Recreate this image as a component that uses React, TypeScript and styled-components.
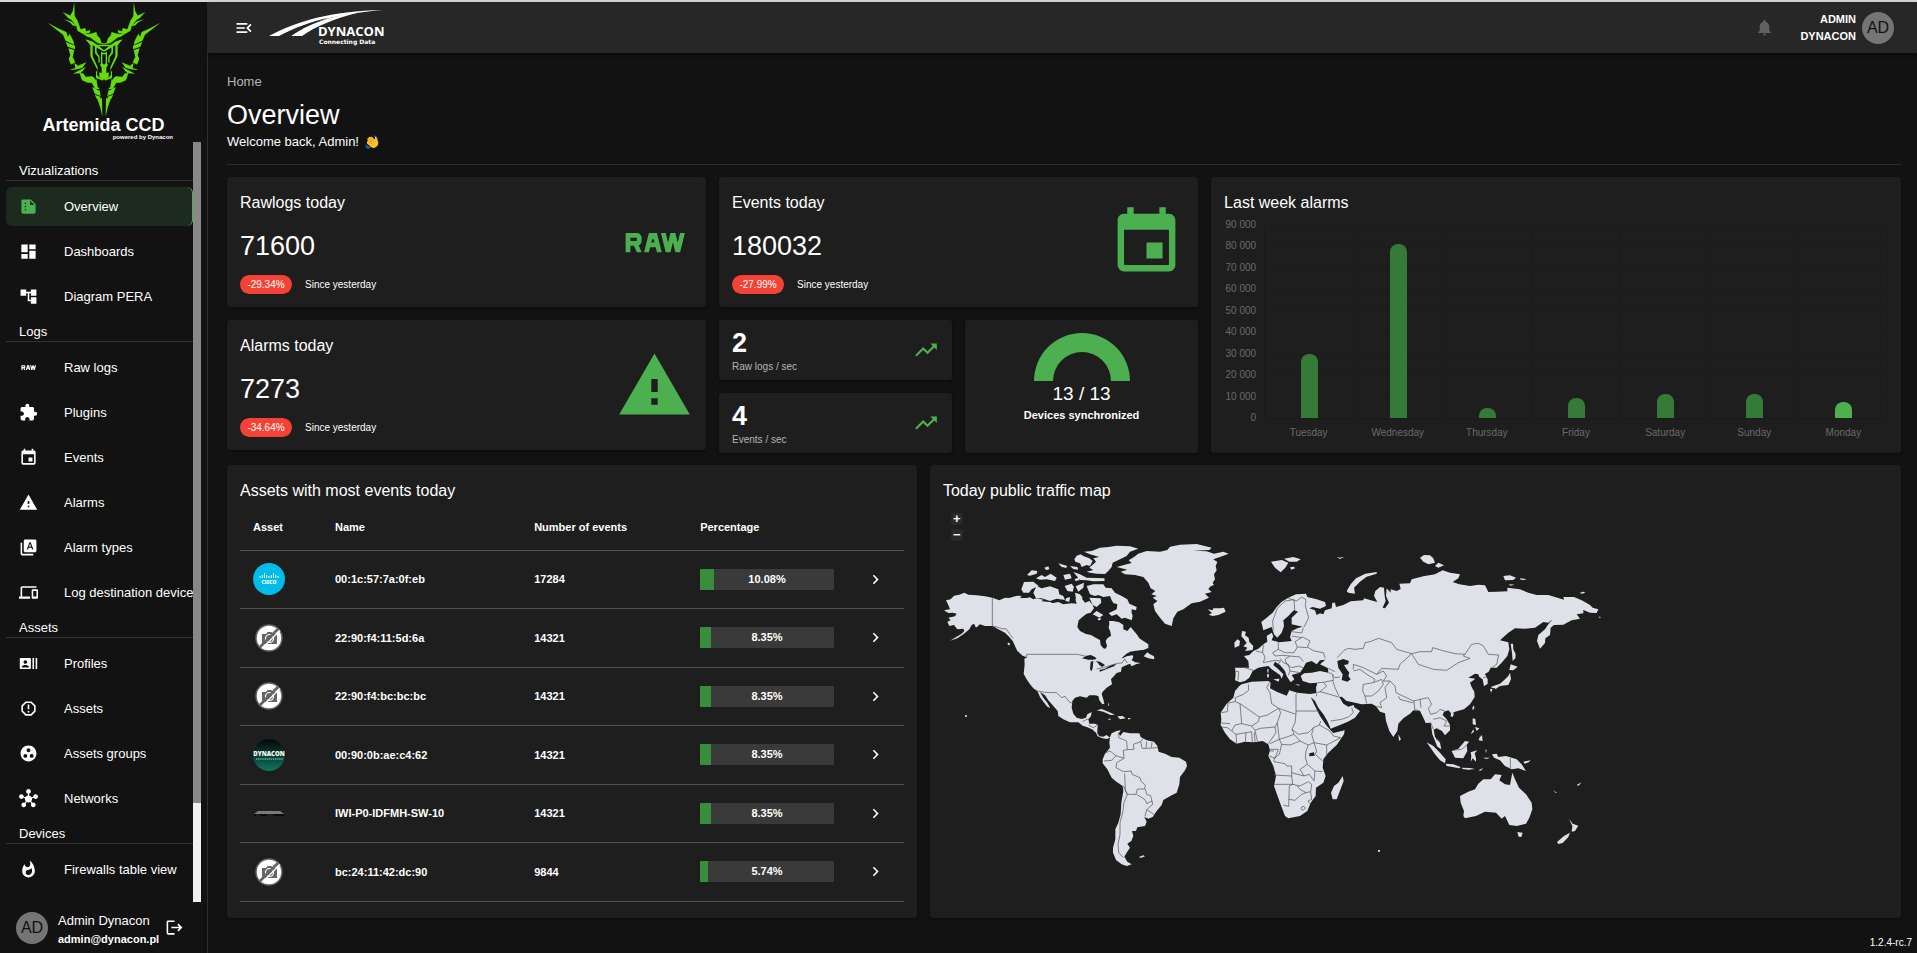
import React from "react";
import styled, { createGlobalStyle, css } from "styled-components";
import {
  MdAccountTree,
  MdChevronRight,
  MdDashboard,
  MdDevices,
  MdEvent,
  MdExtension,
  MdGroupWork,
  MdHub,
  MdLogout,
  MdMenuOpen,
  MdNotifications,
  MdRawOn,
  MdRecentActors,
  MdReportGmailerrorred,
  MdSummarize,
  MdTrendingUp,
  MdTypeSpecimen,
  MdWarning,
  MdWhatshot,
} from "react-icons/md";

const GlobalStyle = createGlobalStyle`
  *, *::before, *::after { box-sizing: border-box; }
  body {
    margin: 0;
    background: #121212;
    color: #fff;
    font-family: Arial, "Liberation Sans", sans-serif;
    font-size: 13px;
    line-height: 18px;
  }
  a { color: inherit; text-decoration: none; }
  button { font: inherit; color: inherit; background: none; border: 0; padding: 0; cursor: pointer; }
  h1, h2, p, ul { margin: 0; padding: 0; font-weight: 400; }
  ul { list-style: none; }
  svg { display: block; }
`;

const green = "#4caf50";

const Page = styled.div`
  display: flex;
  min-height: 100vh;
  border-top: 2px solid #d6dadb;
`;

/* ---------- Sidebar ---------- */

const Sidebar = styled.aside`
  flex: 0 0 208px;
  min-width: 0;
  height: calc(100vh - 2px);
  display: flex;
  flex-direction: column;
  border-right: 1px solid #2e2e2e;
`;

const Brand = styled.a`
  flex: 0 0 140px;
  display: flex;
  flex-direction: column;
  align-items: center;
`;

const BrandName = styled.span`
  font-size: 18px;
  line-height: 18px;
  font-weight: 700;
`;

const BrandNote = styled.span`
  align-self: flex-end;
  margin-right: 34px;
  font-size: 6px;
  line-height: 6px;
  font-weight: 700;
`;

const NavArea = styled.div`
  flex: 1;
  min-height: 0;
  display: flex;
  padding: 0 6px;
`;

const Nav = styled.nav`
  flex: 1;
  min-width: 0;
  overflow: hidden;
  padding-top: 19px;
`;

const ScrollTrack = styled.div`
  flex: 0 0 8px;
  background: #f1f1f1;
`;

const ScrollThumb = styled.div`
  height: 87%;
  background: #888;
`;

const NavHeading = styled.h2`
  padding-left: 13px;
  margin-bottom: 6px;
  border-bottom: 1px solid #333;
  font-size: 13px;
  line-height: 19px;
`;

const NavLink = styled.a<{ $active?: boolean }>`
  display: flex;
  align-items: center;
  gap: 26px;
  height: 39px;
  margin-bottom: 6px;
  padding-left: 13px;
  border-radius: 6px;
  white-space: nowrap;
  svg { flex: none; width: 19px; height: 19px; }
  ${(p) =>
    p.$active &&
    css`
      background: #1d2b1e;
      border-right: 1px solid ${green};
      svg { color: ${green}; }
    `}
`;

const Account = styled.div`
  flex: 0 0 51px;
  display: flex;
  align-items: center;
  padding: 0 23px 0 16px;
`;

const AccountText = styled.div`
  flex: 1;
  padding: 5px 0 0 10px;
  p + p { font-size: 11px; font-weight: 700; }
`;

const Avatar = styled.div`
  flex: none;
  width: 32px;
  height: 32px;
  border-radius: 50%;
  background: #757575;
  color: #121212;
  font-size: 16px;
  line-height: 32px;
  text-align: center;
`;

/* ---------- Main area ---------- */

const Main = styled.main`
  flex: 1;
  min-width: 0;
  display: flex;
  flex-direction: column;
`;

const TopBar = styled.header`
  height: 51px;
  display: flex;
  align-items: center;
  padding: 0 23px 0 26px;
  background: #272727;
  box-shadow: 0 2px 4px rgba(0, 0, 0, 0.5);
`;

const MenuButton = styled.button`
  margin-right: 14px;
`;

const BellButton = styled.button`
  margin-left: auto;
  color: #616161;
`;

const UserButton = styled.button`
  display: flex;
  align-items: center;
  gap: 6px;
  margin-left: 26px;
  text-align: right;
`;

const UserName = styled.span`
  font-size: 11px;
  line-height: 17px;
  font-weight: 700;
`;

const UserAvatar = styled(Avatar)`
  font-weight: 400;
`;

const Content = styled.div`
  flex: 1;
  padding: 20px 16px 0 19px;
`;

const Crumb = styled.a`
  display: block;
  color: #b5b5b5;
`;

const Title = styled.h1`
  margin-top: 6px;
  font-size: 27px;
  line-height: 36px;
`;

const Welcome = styled.p`
  display: flex;
  align-items: center;
  gap: 6px;
  padding-bottom: 13px;
  margin-bottom: 12px;
  border-bottom: 1px solid #2e2e2e;
`;

const Grid = styled.div`
  display: grid;
  grid-template-columns: repeat(12, minmax(0, 1fr));
  gap: 12px 13px;
`;

const Span = styled.div<{ $cols: number }>`
  grid-column: span ${(p) => p.$cols};
`;

const Card = styled.section`
  position: relative;
  padding: 13px;
  border-radius: 3px;
  background: #1e1e1e;
  box-shadow: 0 1px 3px rgba(0, 0, 0, 0.4);
`;

const SpanCard = styled(Card)<{ $cols: number }>`
  grid-column: span ${(p) => p.$cols};
`;

const CardTitle = styled.h2`
  font-size: 16px;
  line-height: 26px;
`;

const Halves = styled.div`
  display: grid;
  grid-template-columns: repeat(2, minmax(0, 1fr));
  gap: 13px;
  align-items: start;
`;

const Stack = styled.div`
  display: grid;
  gap: 13px;
`;

const StatCard = styled(Card)`
  display: flex;
  align-items: center;
  justify-content: space-between;
  height: 130px;
  > svg { width: 77px; height: 77px; color: ${green}; }
`;

const StatValue = styled.p`
  margin: 13px 0 12px;
  font-size: 27px;
  line-height: 34px;
`;

const StatTrend = styled.p`
  display: flex;
  align-items: center;
  gap: 13px;
  font-size: 10px;
`;

const Chip = styled.span`
  width: 52px;
  border-radius: 10px;
  background: #f44336;
  line-height: 19px;
  text-align: center;
`;

const RateCard = styled(Card)`
  display: flex;
  align-items: center;
  justify-content: space-between;
  height: 60px;
  padding: 0 13px;
  svg { width: 26px; height: 26px; color: ${green}; }
`;

const RateValue = styled.p`
  padding-top: 4px;
  font-size: 27px;
  line-height: 30px;
  font-weight: 700;
`;

const RateLabel = styled.p`
  color: #b5b5b5;
  font-size: 10px;
  line-height: 18px;
`;

const SyncCard = styled(Card)`
  display: flex;
  flex-direction: column;
  align-items: center;
  height: 133px;
`;

const SyncValue = styled.p`
  font-size: 19px;
  line-height: 26px;
`;

const SyncLabel = styled.p`
  font-size: 11px;
  line-height: 16px;
  font-weight: 700;
`;

/* ---------- Alarm chart ---------- */

const Chart = styled.div`
  display: grid;
  grid-template-columns: 32px 1fr;
  column-gap: 8px;
  margin-top: 3px;
  color: #6a6a6a;
  font-size: 10px;
  line-height: 12px;
`;

const Ticks = styled.div`
  display: flex;
  flex-direction: column;
  justify-content: space-between;
  height: 205px;
  text-align: right;
`;

const Plot = styled.div`
  display: flex;
  height: 194px;
  margin-top: 6px;
  border-left: 1px solid #1a1a1a;
  border-bottom: 1px solid #1a1a1a;
  background:
    linear-gradient(#1b1b1b 1px, transparent 1px) 0 0 / 100% calc(100% / 9),
    linear-gradient(90deg, transparent calc(100% - 1px), #1b1b1b 0) 0 0 / calc(100% / 7) 100%;
`;

const Slot = styled.div`
  flex: 1;
  display: flex;
  align-items: flex-end;
  justify-content: center;
`;

const Bar = styled.div<{ $today?: boolean }>`
  width: 17px;
  border-radius: 8px 8px 0 0;
  background: ${(p) => (p.$today ? green : "#357a38")};
`;

const Days = styled.div`
  grid-column: 2;
  display: flex;
  margin-top: 3px;
  span { flex: 1; text-align: center; }
`;

/* ---------- Assets table ---------- */

const Table = styled.table`
  width: 100%;
  margin-bottom: 3px;
  table-layout: fixed;
  border-collapse: collapse;
  font-size: 11px;
  font-weight: 700;
  th, td {
    padding: 0 13px;
    border-bottom: 1px solid #515151;
    text-align: left;
  }
  th { height: 46px; }
  td { height: 58px; }
  tr:nth-child(even) td { height: 59px; }
  th:nth-child(1) { width: 82px; }
  th:nth-child(2) { width: 30%; }
  th:nth-child(3) { width: 25%; }
  th:nth-child(5) { width: 57px; }
  td:last-child { padding: 0 19px; }
`;

const Meter = styled.div`
  position: relative;
  height: 21px;
  overflow: hidden;
  border-radius: 1px;
  background: #3a3a3a;
`;

const MeterFill = styled.div`
  height: 100%;
  background: #388e3c;
`;

const MeterText = styled.span`
  position: absolute;
  inset: 0;
  line-height: 21px;
  text-align: center;
`;

const RowButton = styled.button`
  display: block;
  svg { width: 19px; height: 19px; }
`;

/* ---------- Map ---------- */

const MapArea = styled.div`
  position: relative;
  padding-top: 7px;
`;

const ZoomControls = styled.div`
  position: absolute;
  top: 9px;
  left: 8px;
  display: grid;
  gap: 4px;
`;

const ZoomButton = styled.button`
  width: 12px;
  height: 12px;
  border-radius: 2px;
  background: #292929;
  font-size: 13px;
  line-height: 12px;
  font-weight: 700;
`;

const MapDrawing = styled.svg`
  width: 660px;
  max-width: 100%;
  height: auto;
`;

const Version = styled.footer`
  padding: 0 5px 1px 0;
  font-size: 10px;
  line-height: 18px;
  text-align: right;
`;

/* ---------- Drawings ---------- */

const HornHalf = () => (
  <g fill="#63dd0d" stroke="none">
    <path d="M222 9L223 50L232 64L237 80L228 80L213 62L209 50L217 36Z" />
    <path d="M187 38L212 50L222 66L204 57Z" />
    <path d="M191 60L212 66L232 82L216 78L210 70Z" />
    <path d="M228 83L236 76L241 90L254 86L258 96L270 92L268 101L250 104L232 95Z" />
    <path d="M238 97L262 104L277 102L288 98L291 108L277 115L262 113Z" />
    <path d="M268 113L291 108L300 118L303 130L318 136L292 132Z" />
    <path d="M142 70L176 88L198 98L205 120L185 104Z" />
    <path d="M188 107L203 112L208 103L219 124L222 137L196 124Z" />
    <path d="M196 128L224 139L224 150L202 142Z" />
    <path d="M204 147L222 152L217 172L225 189L212 196L205 178L210 168Z" />
    <path d="M207 211L225 206L222 190L233 199L258 189L246 206L222 211Z" />
    <path d="M218 223L257 202L248 214L240 222Z" />
    <path d="M238 222L248 222L256 232L276 231L285 240L280 251L262 250L245 243Z" />
    <path d="M275 252L288 238L292 262L299 270L284 268Z" />
    <path d="M275 263L298 274L301 290L284 284Z" />
    <path d="M283 286L300 292L302 306L290 300Z" />
    <path d="M292 302L305 296L306 352L300 325Z" />
    <path d="M255 120L275 126L290 136L311 136L311 141L296 141L311 152L311 157L289 145L289 158L298 172L298 190L294 190L294 174L284 162L284 142L277 138L277 170L292 204L290 226L304 243L287 236L287 218L291 212L270 170L270 138Z" />
    <path d="M302 157L311 161L311 166L306 164L306 192L311 196L311 240L305 244L297 234L297 218L304 222L304 205L299 196L302 192Z" />
  </g>
);

const StagLogo = () => (
  <svg width="114" height="114" viewBox="140 8 342 342" aria-hidden="true">
    <HornHalf />
    <g transform="translate(622 0) scale(-1 1)">
      <HornHalf />
    </g>
  </svg>
);

const DynaconLogo = () => (
  <svg width="116" height="37" viewBox="0 0 116 37" role="img" aria-label="Dynacon">
    <path d="M1 27C30 12 62 2 115 1C68 5 38 14 11 27Z" fill="#fff" />
    <path d="M23 27C40 15 62 7 92 3C68 9 46 18 34 27Z" fill="#fff" />
    <path d="M12 27C26 19 44 12 60 9C44 14 32 20 23 27Z" fill="#272727" />
    <text x="50" y="27" fill="#fff" fontFamily="Open Sans" fontWeight="700" fontSize="13">DYNACON</text>
    <text x="51" y="35" fill="#fff" fontFamily="DejaVu Sans" fontWeight="700" fontSize="6">Connecting Data</text>
  </svg>
);

const WavingHand = () => (
  <svg width="14" height="14" viewBox="0 0 28 28" aria-hidden="true">
    <path d="M3 20q2 5 7 5M1 22q2 5 6 5M19 2q4 0 6 4M18 5" fill="none" stroke="#2e87c8" strokeWidth="2" strokeLinecap="round" />
    <path d="M4 13L6 11L4 8L7 6L8 4L11 4L13 3L20 9L20 4Q23 3 24 7L26 13Q28 21 22 24Q17 28 12 24L4 17Z" fill="#fbc02d" />
    <path d="M6 10L14 17M7 6L16 14M11 4L18 11" stroke="#d98b12" strokeWidth="1.4" />
  </svg>
);

const DonutArc = () => (
  <svg width="96" height="48" viewBox="0 0 96 48" aria-hidden="true">
    <path d="M0 48A48 48 0 0 1 96 48H77A29 29 0 0 0 19 48Z" fill={green} />
  </svg>
);

const CiscoAvatar = () => (
  <svg width="32" height="32" viewBox="0 0 32 32" role="img" aria-label="Cisco">
    <circle cx="16" cy="16" r="16" fill="#00bceb" />
    <path
      d="M7 13v2M9.300 12v3M11.500 10v5M13.700 12v3M16 13v2M18.300 12v3M20.500 10v5M22.700 12v3M25 13v2"
      stroke="#fff"
      strokeWidth="1"
    />
    <text x="16" y="21" fill="#fff" fontFamily="Open Sans" fontSize="5" fontWeight="800" textAnchor="middle">CISCO</text>
  </svg>
);

const NoPhotoAvatar = () => (
  <svg width="32" height="32" viewBox="0 0 32 32" role="img" aria-label="No picture">
    <circle cx="16" cy="16" r="13" fill="#fff" stroke="#666" strokeWidth="1.500" />
    <path d="M9 12h4l1.500-2h4l1.500 2h4v10H9z" fill="#666" />
    <circle cx="16.500" cy="16.500" r="4" fill="#666" stroke="#fff" strokeWidth="1.200" />
    <path d="M9 26.500L27 8.500" stroke="#fff" strokeWidth="1.200" />
    <path d="M7 25L25 7" stroke="#666" strokeWidth="2.600" />
  </svg>
);

const DynaconAvatar = () => (
  <svg width="32" height="32" viewBox="0 0 32 32" role="img" aria-label="Dynacon">
    <defs>
      <linearGradient id="deep" x1="0" y1="0" x2="0" y2="1">
        <stop offset="0" stopColor="#020606" />
        <stop offset="1" stopColor="#0f7560" />
      </linearGradient>
    </defs>
    <circle cx="16" cy="16" r="16" fill="url(#deep)" />
    <text x="16" y="17" fill="#fff" fontFamily="Open Sans" fontSize="6" fontWeight="800" textAnchor="middle">DYNACON</text>
    <path d="M3 20H30" stroke="#9cc" strokeWidth="1" strokeDasharray="1.500 .6" />
  </svg>
);

const SwitchAvatar = () => (
  <svg width="32" height="32" viewBox="0 0 32 32" role="img" aria-label="Switch">
    <path d="M5 14H27L31 17H1Z" fill="#7d7a76" />
    <path d="M1 17H31V19H1Z" fill="#0b0b0d" />
    <path d="M3 18H7M14 18H20" stroke="#333" strokeWidth="1" />
  </svg>
);

const Land = styled.path`
  fill: #dee1e8;
`;

const Sea = styled.path`
  fill: #1e1e1e;
`;

const Border = styled.path`
  fill: none;
  stroke: #4b4d50;
  stroke-width: 2;
`;

const WorldMap = () => (
  <MapDrawing viewBox="39 30 1980 1140" role="img" aria-label="World map">
    <g strokeLinejoin="round">
      <Land d="M42 328L60 325L55 312L48 298L62 295L72 284L88 281L103 275L115 281L140 283L165 286L187 290L208 298L225 290L238 291L250 287L262 284L275 285L270 291L290 291L300 289L310 295L320 292L340 296L332 303L350 306L370 306L385 303L400 310L425 307L440 308L436 295L445 290L455 292L465 305L478 300L488 312L492 322L482 335L470 338L458 347L446 358L442 378L450 390L468 399L483 402L497 410L510 417L512 432L520 442L527 443L531 435L527 420L532 412L543 404L541 392L536 380L538 368L537 360L550 360L568 364L580 372L580 385L592 390L602 378L610 388L622 402L628 412L640 420L655 430L655 441L640 447L618 449L600 452L588 460L576 474L590 464L606 459L610 468L605 478L616 484L632 486L618 490L605 496L600 488L590 492L575 499L573 512L560 516L552 525L543 535L546 550L530 560L518 572L515 580L520 595L523 608L517 610L508 598L505 585L495 583L478 583L470 590L450 586L435 590L427 600L425 620L430 638L440 650L455 654L468 650L472 640L485 633L483 645L475 655L478 668L495 668L504 672L502 685L502 697L508 706L520 707L530 702L540 710L530 714L515 711L503 706L498 695L486 685L470 678L458 674L445 664L420 664L400 655L385 645L383 630L370 615L355 598L345 583L330 573L340 590L352 605L361 622L352 617L340 602L330 588L322 570L310 562L300 550L288 532L281 518L284 490L283 473L290 470L278 460L262 450L248 420L238 408L225 395L205 385L187 375L165 375L150 370L138 380L132 368L125 372L118 385L100 400L82 412L60 419L75 410L95 398L103 390L100 383L82 385L72 372L58 375L52 362L62 358L55 350L75 346L80 338L68 335L55 336Z" />
      <Sea d="M456 472L470 464L482 462L495 468L500 474L488 476L475 476ZM482 482L490 480L488 500L485 511L480 505ZM496 480L510 482L525 492L516 498L508 492L502 484ZM508 507L525 503L540 494L560 488L552 496L530 504L510 512ZM574 472L590 458L612 452L640 447L610 462L590 466Z" />
      <Land d="M641 466L652 454L660 460L672 466L673 475L655 472ZM462 152L485 150L510 140L535 138L560 134L600 136L625 143L600 152L590 165L570 175L548 185L545 198L535 210L525 219L500 218L480 215L470 212L490 207L478 200L498 182L490 172L508 168L480 160ZM433 175L440 164L452 160L460 165L478 172L488 180L480 195L470 192L455 198L450 187L436 182ZM430 213L450 220L470 230L523 232L524 240L490 241L470 238L450 237L440 225ZM470 255L490 250L520 250L527 260L545 262L555 275L575 285L592 295L598 308L620 318L618 328L605 325L605 335L608 345L605 358L585 350L575 353L560 340L545 345L536 337L560 325L562 310L550 306L545 298L540 285L520 288L505 282L495 285L480 280L475 268ZM478 290L512 292L514 305L500 318L488 312ZM488 340L500 330L520 342L508 350ZM310 275L320 255L335 262L360 256L385 265L388 280L400 285L405 297L380 293L360 300L335 292L318 292ZM274 265L282 243L310 242L326 255L305 265L297 275L280 275ZM291 222L305 208L322 210L320 218L300 224ZM318 232L335 222L345 228L362 218L380 230L375 240L350 235L330 236ZM385 187L412 195L408 201L394 197ZM400 222L420 218L425 232L405 236ZM404 255L425 248L432 258L428 272L412 270ZM437 256L462 245L460 260L445 272ZM435 275L450 280L458 290L446 303L438 295ZM343 200L355 196L358 205L348 207ZM420 195L442 198L445 206L430 204ZM434 234L446 230L448 238L436 240ZM408 292L420 288L418 302L406 300ZM330 300L365 304L362 309L332 305ZM503 353L512 350L512 357L504 358ZM233 425L240 426L238 434L233 430ZM262 450L275 456L288 468L278 464Z" />
      <Land d="M560 198L590 190L605 186L596 178L612 168L625 158L650 150L690 152L712 147L720 137L750 131L800 129L845 140L838 147L790 149L830 151L852 158L880 152L896 158L870 168L850 175L862 183L857 195L860 208L852 220L855 235L848 245L852 252L842 256L835 264L845 273L825 278L837 290L810 302L785 307L760 325L742 332L730 352L725 375L705 368L690 350L675 330L670 310L682 300L668 290L680 285L664 280L676 270L662 262L655 245L640 228L615 222L585 220L572 212L592 206Z" />
      <Land d="M833 325L848 328L850 322L870 322L882 320L887 332L865 342L848 345L836 341L846 336ZM500 628L515 624L535 632L555 641L542 642L520 632ZM562 646L578 645L587 652L570 655ZM535 653L543 653L541 656L535 656ZM594 651L602 652L600 655L594 655ZM627 1068L640 1063L645 1066L632 1071ZM105 642L111 643L110 648L105 647ZM535 603L537 612L534 616Z" />
      <Land d="M540 708L545 697L560 690L572 688L566 698L571 704L580 693L600 697L628 697L632 708L650 718L672 722L682 735L686 752L705 758L725 768L748 770L768 782L771 795L765 808L750 828L748 850L740 875L725 883L700 897L695 912L680 930L668 948L655 953L643 948L650 962L645 975L622 979L618 990L606 990L610 1005L604 1020L592 1028L600 1040L590 1055L583 1067L592 1082L605 1090L590 1095L575 1090L558 1077L549 1055L549 1040L556 1015L556 985L565 965L572 940L574 905L580 870L578 855L560 843L545 830L532 805L518 787L518 775L525 758L540 740L538 725Z" />
      <Border d="M187 290V375L205 379L218 384L228 383L240 400L250 412M290 470V460H443L468 466M500 504L520 500L545 492L562 487L576 486L584 474L592 486M322 570L345 574L380 575L395 590L405 586L418 603L427 607M458 662L470 655L478 655M475 672L490 680L504 672M566 694L566 710L590 720L592 746L580 748L582 772M592 746L612 745L610 730L632 722L640 712M632 722L636 742L650 742L684 740M650 722L648 742M666 724L664 740M525 756L540 750L558 764L545 778L522 780M558 764L582 772L560 785L558 800L580 812L604 810L606 820L630 830L634 842L646 852L644 864L622 864L618 880L592 880L586 868L584 818M646 864L650 880L662 884L666 900L650 908L645 896L620 880M666 900L668 910L650 926L645 946M650 926L672 940M592 880L582 905L578 935L570 965L570 1000L564 1030L566 1055L580 1070M580 855L592 880" />
    </g>
    <g transform="translate(870 60)" strokeLinejoin="round">
      <Land d="M124 303L140 290L158 275L170 258L185 242L205 230L228 220L258 218L262 228L290 235L315 243L318 255L300 263L278 258L268 262L285 268L290 282L300 277L310 280L315 268L335 262L337 245L345 245L348 258L370 252L392 241L430 238L432 232L450 237L472 243L462 225L466 210L480 198L492 200L494 225L497 240L488 260L495 262L507 245L498 225L500 202L512 215L512 205L530 210L542 204L538 188L570 187L575 175L610 166L645 160L668 148L690 155L720 160L715 172L698 183L718 190L750 195L775 191L795 193L805 213L830 212L862 211L862 200L900 205L925 215L950 222L985 222L1032 236L1030 228L1062 228L1085 238L1110 252L1118 260L1135 265L1130 276L1110 275L1090 267L1090 277L1070 280L1080 293L1055 298L1030 311L1002 312L992 320L990 342L976 352L975 366L960 383L951 360L955 342L975 325L985 310L998 295L985 305L970 303L945 320L915 323L885 322L865 335L840 358L865 364L868 385L862 405L845 425L830 440L812 440L806 452L795 459L803 475L803 488L792 496L788 475L778 468L775 460L765 458L745 470L766 473L750 485L756 500L763 512L764 528L750 550L732 565L705 572L695 578L685 568L672 572L668 582L680 595L690 612L690 628L675 643L666 630L650 622L641 626L645 648L660 665L664 685L652 677L643 655L637 640L632 605L617 606L610 590L600 570L580 568L572 577L550 592L535 608L532 630L520 648L508 630L498 600L495 577L480 572L468 556L455 548L425 550L395 543L380 540L365 527L358 528L370 548L385 557L402 552L402 558L420 570L405 590L382 603L332 623L322 600L310 580L295 560L285 540L275 530L290 525L288 500L292 485L270 487L248 480L242 465L252 457L275 455L300 450L325 455L324 442L300 430L316 416L300 418L290 430L275 420L258 425L250 440L240 455L222 460L215 462L223 475L212 484L200 465L195 450L180 432L165 422L160 432L175 445L190 460L185 473L180 462L155 445L145 435L130 437L115 440L98 450L88 470L75 480L60 484L45 478L47 460L45 440L75 440L87 440L85 420L72 405L88 402L100 390L115 383L130 370L142 362L140 345L155 335L160 345L155 358L178 364L215 360L210 348L215 330L232 322L248 317L215 310L215 290L234 272L222 267L205 285L190 298L192 315L185 335L172 350L162 340L155 318L130 328Z" />
      <Land d="M65 490L95 482L145 480L152 485L150 502L170 512L200 524L208 508L232 515L270 519L290 516L286 534L273 530L285 555L300 585L318 612L332 628L340 636L374 628L372 640L350 672L325 695L310 715L308 740L317 765L310 785L288 800L287 825L272 845L262 870L240 885L205 892L195 885L180 845L162 795L168 765L160 735L145 705L150 688L145 670L128 660L100 664L75 662L50 668L30 655L15 635L2 612L4 595L2 575L20 548L40 530L45 510L58 495Z" />
      <Sea d="M352 420L370 414L387 420L384 430L372 432L380 445L388 455L385 465L392 475L382 482L365 477L368 460L355 440ZM268 697L282 694L284 704L268 706Z" />
      <Land d="M66 330L78 332L75 343L86 350L88 363L100 375L98 387L75 390L82 380L70 376L80 366L72 355L64 345ZM43 365L52 355L60 360L58 374L44 380ZM153 122L185 117L205 125L196 140L182 154L165 140ZM192 113L220 108L242 115L230 122L208 122ZM210 139L222 137L225 142L214 146ZM350 107L360 110L374 107L360 114ZM470 153L470 158L440 167L420 182L402 200L405 218L385 215L380 210L392 190L408 172L436 158ZM600 110L612 102L630 103L640 112L645 125L625 130L610 122ZM645 135L655 125L672 133L655 140ZM850 165L870 163L888 170L880 177L855 178ZM900 172L920 174L912 177L902 176ZM866 190L884 191L872 194ZM1078 216L1090 212L1096 214L1088 218ZM872 368L879 368L880 385L887 400L886 412L878 420L876 395ZM872 430L893 437L880 448L868 447ZM870 455L873 475L865 492L845 494L820 502L812 498L840 488L852 478L865 465ZM810 503L818 505L813 515ZM824 499L836 498L826 505ZM762 553L763 562L758 568L757 560ZM693 574L702 578L698 588L692 586ZM758 592L766 594L768 612L758 610ZM765 618L778 622L770 630ZM778 650L786 642L788 660L776 658ZM760 625L762 632L752 640ZM535 640L543 655L537 660ZM620 664L640 675L660 695L677 715L675 727L660 718L645 700ZM677 728L700 730L722 738L718 742L680 735ZM725 740L750 741L765 744L745 746L728 744ZM775 748L790 741L782 749ZM695 690L715 683L735 660L747 662L740 672L742 690L730 712L705 710ZM752 694L772 688L764 697L768 712L768 722L758 712L752 722L754 705ZM796 684L800 688L798 696ZM788 710L810 710L800 714ZM816 700L830 698L835 708L858 705L890 715L905 730L918 750L895 742L875 745L855 735L840 718L822 710ZM910 722L932 718L926 724L914 728ZM940 722L950 732M972 740L980 748M720 825L745 812L765 805L775 788L790 775L812 775L825 760L845 762L838 778L855 790L870 792L877 755L885 775L897 800L918 820L935 845L937 865L928 890L918 908L890 915L868 912L855 885L845 893L828 875L795 872L768 885L735 892L730 885L732 870L722 845ZM892 933L908 935L904 948L896 947ZM1047 893L1058 908L1075 914L1065 930L1055 932L1057 915ZM1050 935L1045 948L1028 966L1015 969L1011 963L1032 945ZM1000 808L1012 817L1006 815ZM1070 792L1084 784L1076 794ZM368 765L371 780L350 835L338 835L333 815L342 795L355 785ZM474 987L480 987L480 992L474 992ZM142 443L146 445L145 455L142 454ZM142 458L147 460L146 470L141 468ZM160 475L178 473L176 482ZM225 490L240 491L236 494ZM1135 286L1144 290L1138 290Z" />
      <Border d="M160 328L158 300L172 262L195 240L222 236L224 266M205 232L230 240L245 228L258 236L256 255L266 290L252 318M130 370L128 395L108 390M128 395L135 408L130 425L145 422L165 418L182 420L172 432M175 364V385L158 395L165 405L185 403L210 405M175 385L195 395L222 395L232 378L225 362L248 348L270 360L262 378L282 390L310 395L316 412M215 345L245 350M215 332L245 336L250 320M232 378L262 380M210 405L195 415L200 430L215 440L235 435L250 440M210 405L240 408L250 422M45 450L56 452L54 478M75 440L100 448M180 412L190 425L205 430L210 450L205 462M210 450L240 455M325 455L335 458L345 470L360 468M325 442L345 452M292 485L310 484L340 478L338 460M352 410L372 388L385 382L405 385L430 382L435 365L450 362L476 352L515 365L530 385L575 398L600 392L635 392L638 380L665 388L705 398L735 400L755 370L775 367L790 375L805 400L836 402L830 430L815 440M575 398L595 430L640 445L680 448L715 425L750 412L730 405L735 400M575 398L540 430L535 445L485 442L470 460L430 440L400 430V445M400 450L420 445L440 460L465 475L460 485L430 490L428 510L435 525L440 548M470 460L490 450L500 465L490 480L510 480L525 495L528 515L580 540L600 535L625 530L635 550L625 562L632 580M460 485L485 475L490 490L475 510L455 525L435 525M510 480L495 500L500 530L480 545L485 560L470 556M535 525L540 535L580 546M582 538L584 565L600 570M600 535L603 560M632 580L650 575L660 565L675 570M640 595L660 590L680 600L672 615L690 615M632 605L640 625M648 655L660 658M310 484L320 495L300 512L290 516M338 478L345 500L358 528M300 512L330 520L355 528M332 600L365 595L385 588L400 575L395 560M698 688L725 685L740 672M871 711V742M790 470L800 468" />
      <Border d="M85 490L86 508L70 520L46 530M46 530V542L60 548L118 588L115 602L95 615L65 608L60 548M4 575L22 572L24 546L46 542M118 588L142 582L176 562L155 548L150 515L140 500L148 485M176 562L228 580V520L232 515M228 570H298M228 580L225 605L216 625L222 640L200 648L178 655M176 562L182 575L172 605L178 655L150 668M172 605L165 618L120 622L105 628L112 660M165 618L168 635L145 668M95 615L105 628M65 608L45 612L35 630L22 620L4 618M4 606L30 608M35 630L48 640L50 668M78 635L76 662M95 632L97 664M103 634L105 662M78 635L95 632M48 640L78 635M222 640L240 660L265 672L282 665L275 640L280 620L298 612L302 600M216 625L235 640L265 635L280 620M298 612L330 630L340 645L362 650L320 672L282 665M320 672V705L312 712M282 665L290 690L286 700L308 720M178 655L185 670L210 672L240 660M185 670L178 700L162 712L162 722L195 728L200 735H215V765L160 762M265 672L258 690L256 710L262 730L240 745L252 765L215 755M162 690H150M148 705L165 712L175 685L150 685M262 730L285 750L308 752M285 750L282 780L268 760L252 765M215 765L218 790L162 790M218 790L208 795L206 856L190 852M218 790L240 795L265 782L275 790L272 812L258 815L240 805L232 795M206 835L225 838L245 820L258 815M272 812L275 835L264 840L270 848M245 858L252 856L256 862L248 868L243 864Z" />
    </g>
  </MapDrawing>
);

/* ---------- Data ---------- */

const navigation = [
  {
    heading: "Vizualizations",
    links: [
      { label: "Overview", Icon: MdSummarize, active: true },
      { label: "Dashboards", Icon: MdDashboard },
      { label: "Diagram PERA", Icon: MdAccountTree },
    ],
  },
  {
    heading: "Logs",
    links: [
      { label: "Raw logs", Icon: MdRawOn },
      { label: "Plugins", Icon: MdExtension },
      { label: "Events", Icon: MdEvent },
      { label: "Alarms", Icon: MdWarning },
      { label: "Alarm types", Icon: MdTypeSpecimen },
      { label: "Log destination devices", Icon: MdDevices },
    ],
  },
  {
    heading: "Assets",
    links: [
      { label: "Profiles", Icon: MdRecentActors },
      { label: "Assets", Icon: MdReportGmailerrorred },
      { label: "Assets groups", Icon: MdGroupWork },
      { label: "Networks", Icon: MdHub },
    ],
  },
  {
    heading: "Devices",
    links: [{ label: "Firewalls table view", Icon: MdWhatshot }],
  },
] as { heading: string; links: { label: string; Icon: React.ComponentType; active?: boolean }[] }[];

const ticks = ["90 000", "80 000", "70 000", "60 000", "50 000", "40 000", "30 000", "20 000", "10 000", "0"];

const alarms = [
  { day: "Tuesday", value: 29900 },
  { day: "Wednesday", value: 81000 },
  { day: "Thursday", value: 4700 },
  { day: "Friday", value: 9500 },
  { day: "Saturday", value: 11200 },
  { day: "Sunday", value: 11100 },
  { day: "Monday", value: 7273 },
];

const assets = [
  { Picture: CiscoAvatar, name: "00:1c:57:7a:0f:eb", events: 17284, share: "10.08%" },
  { Picture: NoPhotoAvatar, name: "22:90:f4:11:5d:6a", events: 14321, share: "8.35%" },
  { Picture: NoPhotoAvatar, name: "22:90:f4:bc:bc:bc", events: 14321, share: "8.35%" },
  { Picture: DynaconAvatar, name: "00:90:0b:ae:c4:62", events: 14321, share: "8.35%" },
  { Picture: SwitchAvatar, name: "IWI-P0-IDFMH-SW-10", events: 14321, share: "8.35%" },
  { Picture: NoPhotoAvatar, name: "bc:24:11:42:dc:90", events: 9844, share: "5.74%" },
];

type StatProps = { title: string; value: string; change: string; Icon: React.ComponentType };

const Stat = ({ title, value, change, Icon }: StatProps) => (
  <StatCard>
    <div>
      <CardTitle>{title}</CardTitle>
      <StatValue>{value}</StatValue>
      <StatTrend>
        <Chip>{change}</Chip>
        Since yesterday
      </StatTrend>
    </div>
    <Icon />
  </StatCard>
);

const Rate = ({ value, label }: { value: string; label: string }) => (
  <RateCard>
    <div>
      <RateValue>{value}</RateValue>
      <RateLabel>{label}</RateLabel>
    </div>
    <MdTrendingUp />
  </RateCard>
);

export default function App() {
  return (
    <Page>
      <GlobalStyle />
      <Sidebar>
        <Brand href="#">
          <StagLogo />
          <BrandName>Artemida CCD</BrandName>
          <BrandNote>powered by Dynacon</BrandNote>
        </Brand>
        <NavArea>
          <Nav>
            {navigation.map((group) => (
              <React.Fragment key={group.heading}>
                <NavHeading>{group.heading}</NavHeading>
                {group.links.map(({ label, Icon, active }) => (
                  <NavLink key={label} href="#" $active={active}>
                    <Icon />
                    {label}
                  </NavLink>
                ))}
              </React.Fragment>
            ))}
          </Nav>
          <ScrollTrack>
            <ScrollThumb />
          </ScrollTrack>
        </NavArea>
        <Account>
          <Avatar>AD</Avatar>
          <AccountText>
            <p>Admin Dynacon</p>
            <p>admin@dynacon.pl</p>
          </AccountText>
          <button aria-label="Log out">
            <MdLogout size={19} />
          </button>
        </Account>
      </Sidebar>

      <Main>
        <TopBar>
          <MenuButton aria-label="Collapse menu">
            <MdMenuOpen size={20} />
          </MenuButton>
          <DynaconLogo />
          <BellButton aria-label="Notifications">
            <MdNotifications size={19} />
          </BellButton>
          <UserButton>
            <UserName>
              ADMIN
              <br />
              DYNACON
            </UserName>
            <UserAvatar as="span">AD</UserAvatar>
          </UserButton>
        </TopBar>

        <Content>
          <Crumb href="#">Home</Crumb>
          <Title>Overview</Title>
          <Welcome>
            Welcome back, Admin! <WavingHand />
          </Welcome>

          <Grid>
            <Span $cols={7}>
              <Stack>
                <Halves>
                  <Stat title="Rawlogs today" value="71600" change="-29.34%" Icon={MdRawOn} />
                  <Stat title="Events today" value="180032" change="-27.99%" Icon={MdEvent} />
                </Halves>
                <Halves>
                  <Stat title="Alarms today" value="7273" change="-34.64%" Icon={MdWarning} />
                  <Halves>
                    <Stack>
                      <Rate value="2" label="Raw logs / sec" />
                      <Rate value="4" label="Events / sec" />
                    </Stack>
                    <SyncCard>
                      <DonutArc />
                      <SyncValue>13 / 13</SyncValue>
                      <SyncLabel>Devices synchronized</SyncLabel>
                    </SyncCard>
                  </Halves>
                </Halves>
              </Stack>
            </Span>

            <SpanCard $cols={5}>
              <CardTitle>Last week alarms</CardTitle>
              <Chart>
                <Ticks>
                  {ticks.map((tick) => (
                    <span key={tick}>{tick}</span>
                  ))}
                </Ticks>
                <Plot>
                  {alarms.map(({ day, value }) => (
                    <Slot key={day}>
                      <Bar $today={day === "Monday"} style={{ height: `${(value / 90000) * 100}%` }} />
                    </Slot>
                  ))}
                </Plot>
                <Days>
                  {alarms.map(({ day }) => (
                    <span key={day}>{day}</span>
                  ))}
                </Days>
              </Chart>
            </SpanCard>

            <SpanCard $cols={5}>
              <CardTitle>Assets with most events today</CardTitle>
              <Table>
                <thead>
                  <tr>
                    <th>Asset</th>
                    <th>Name</th>
                    <th>Number of events</th>
                    <th>Percentage</th>
                    <th aria-label="Details" />
                  </tr>
                </thead>
                <tbody>
                  {assets.map(({ Picture, name, events, share }) => (
                    <tr key={name}>
                      <td>
                        <Picture />
                      </td>
                      <td>{name}</td>
                      <td>{events}</td>
                      <td>
                        <Meter>
                          <MeterFill style={{ width: share }} />
                          <MeterText>{share}</MeterText>
                        </Meter>
                      </td>
                      <td>
                        <RowButton aria-label={`Open ${name}`}>
                          <MdChevronRight />
                        </RowButton>
                      </td>
                    </tr>
                  ))}
                </tbody>
              </Table>
            </SpanCard>

            <SpanCard $cols={7}>
              <CardTitle>Today public traffic map</CardTitle>
              <MapArea>
                <WorldMap />
                <ZoomControls>
                  <ZoomButton aria-label="Zoom in">+</ZoomButton>
                  <ZoomButton aria-label="Zoom out">−</ZoomButton>
                </ZoomControls>
              </MapArea>
            </SpanCard>
          </Grid>
        </Content>
        <Version>1.2.4-rc.7</Version>
      </Main>
    </Page>
  );
}
